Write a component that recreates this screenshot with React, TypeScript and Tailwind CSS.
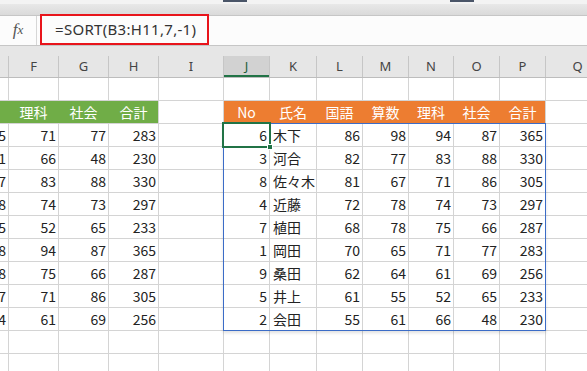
import React from 'react';

type Col = { key: string; w: string };

const cols: Col[] = [
  { key: '', w: 'w-[9px]' },
  { key: 'F', w: 'w-[50px]' },
  { key: 'G', w: 'w-[50px]' },
  { key: 'H', w: 'w-[50px]' },
  { key: 'I', w: 'w-[65px]' },
  { key: 'J', w: 'w-[46px]' },
  { key: 'K', w: 'w-[47px]' },
  { key: 'L', w: 'w-[46px]' },
  { key: 'M', w: 'w-[46px]' },
  { key: 'N', w: 'w-[45px]' },
  { key: 'O', w: 'w-[46px]' },
  { key: 'P', w: 'w-[46px]' },
  { key: 'Q', w: 'w-[64px]' },
];

// left table, columns E..H (E is cut off at the window edge)
const leftRows = [
  ['65', '71', '77', '283'],
  ['61', '66', '48', '230'],
  ['77', '83', '88', '330'],
  ['78', '74', '73', '297'],
  ['55', '52', '65', '233'],
  ['98', '94', '87', '365'],
  ['78', '75', '66', '287'],
  ['67', '71', '86', '305'],
  ['64', '61', '69', '256'],
];

// spilled result of SORT, columns J..P
const sorted = [
  ['6', '木下', '86', '98', '94', '87', '365'],
  ['3', '河合', '82', '77', '83', '88', '330'],
  ['8', '佐々木', '81', '67', '71', '86', '305'],
  ['4', '近藤', '72', '78', '74', '73', '297'],
  ['7', '植田', '68', '78', '75', '66', '287'],
  ['1', '岡田', '70', '65', '71', '77', '283'],
  ['9', '桑田', '62', '64', '61', '69', '256'],
  ['5', '井上', '61', '55', '52', '65', '233'],
  ['2', '会田', '55', '61', '66', '48', '230'],
];

const greenHead = ['', '理科', '社会', '合計'];
const orangeHead = ['No', '氏名', '国語', '算数', '理科', '社会', '合計'];

const cellBase = 'flex h-full shrink-0 items-center overflow-hidden whitespace-nowrap border-r border-[#d4d4d4]';

function Row({ cells }: { cells: React.ReactNode[] }) {
  return (
    <div className="flex h-[23px] border-b border-[#d4d4d4]">
      {cells.map((c, i) => (
        <React.Fragment key={i}>{c}</React.Fragment>
      ))}
    </div>
  );
}

function Num({ w, v }: { w: string; v: string }) {
  return <div className={`${cellBase} ${w} justify-end pr-[2px]`}>{v}</div>;
}

function Empty({ w }: { w: string }) {
  return <div className={`${cellBase} ${w}`} />;
}

export default function App() {
  const rows: React.ReactNode[][] = [];

  // row 1: empty
  rows.push(cols.map((c) => <Empty w={c.w} />));

  // row 2: headers
  rows.push(
    cols.map((c, i) => {
      if (i < 4) {
        return (
          <div className={`flex h-full shrink-0 items-center justify-center bg-[#70ad47] text-white ${c.w} ${i < 3 ? 'border-r border-[#70ad47]' : 'border-r border-[#d4d4d4]'}`}>
            {greenHead[i]}
          </div>
        );
      }
      if (i >= 5 && i <= 11) {
        return (
          <div className={`flex h-full shrink-0 items-center justify-center bg-[#ed7d31] text-white ${c.w} ${i < 11 ? 'border-r border-[#ed7d31]' : 'border-r border-[#d4d4d4]'}`}>
            {orangeHead[i - 5]}
          </div>
        );
      }
      return <Empty w={c.w} />;
    }),
  );

  // rows 3-11: data
  for (let r = 0; r < 9; r++) {
    const l = leftRows[r];
    const s = sorted[r];
    rows.push([
      <Num w={cols[0].w} v={l[0]} />,
      <Num w={cols[1].w} v={l[1]} />,
      <Num w={cols[2].w} v={l[2]} />,
      <Num w={cols[3].w} v={l[3]} />,
      <Empty w={cols[4].w} />,
      <Num w={cols[5].w} v={s[0]} />,
      <div className={`${cellBase} ${cols[6].w} pl-[3px]`}>{s[1]}</div>,
      <Num w={cols[7].w} v={s[2]} />,
      <Num w={cols[8].w} v={s[3]} />,
      <Num w={cols[9].w} v={s[4]} />,
      <Num w={cols[10].w} v={s[5]} />,
      <Num w={cols[11].w} v={s[6]} />,
      <Empty w={cols[12].w} />,
    ]);
  }

  // rows 12-13: empty
  rows.push(cols.map((c) => <Empty w={c.w} />));
  rows.push(cols.map((c) => <Empty w={c.w} />));

  return (
    <div className="h-[371px] w-[587px] overflow-hidden bg-white font-['Noto_Sans_CJK_JP',sans-serif] text-[#222]">
      {/* ribbon edge */}
      <div className="h-[16px] border-b border-[#c6c6c6]">
        <div className="flex h-[4px] bg-[#f3f3f3] pl-[223px]">
          <span className="h-[2px] w-[24px] bg-[#4a5568]" />
          <span className="ml-[203px] h-[2px] w-[24px] bg-[#4a5568]" />
        </div>
        <div className="h-[11px] bg-gradient-to-b from-[#e8e8e8] to-[#dadada]" />
      </div>

      {/* formula bar */}
      <div className="flex h-[30px] items-start border-b border-[#c6c6c6] bg-[#fcfcfc]">
        <div className="flex h-full w-[37px] items-center justify-center border-r border-[#d6d6d6] pb-[1px] font-['Liberation_Serif',serif] text-[17px] italic text-[#555]">
          f<span className="text-[13px]">x</span>
        </div>
        <div className="-mt-[2px] ml-[3px] flex h-[31px] w-[169px] items-center border-2 border-[#e8141b] pl-[13px] font-['Noto_Sans',sans-serif] text-[15px] tracking-[0.3px] text-[#333]">
          =SORT(B3:H11,7,-1)
        </div>
      </div>

      {/* column headers */}
      <div className="h-[10px] bg-[#e6e6e6]" />
      <div className="flex h-[22px] border-b border-[#bdbdbd] bg-[#e6e6e6] font-['Noto_Sans',sans-serif] text-[13px] text-[#444]">
        {cols.map((c) =>
          c.key === 'J' ? (
            <div
              key="J"
              className={`flex h-full shrink-0 items-center justify-center border-r border-[#c6c6c6] bg-[#d2d2d2] text-[#1d5e3a] shadow-[inset_0_-2px_0_#217346] ${c.w}`}
            >
              {c.key}
            </div>
          ) : (
            <div key={c.key || 'E'} className={`flex h-full shrink-0 items-center justify-center border-r border-[#c6c6c6] ${c.w}`}>
              {c.key}
            </div>
          ),
        )}
      </div>

      {/* grid */}
      <div className="relative text-[14px]">
        {rows.map((cells, i) => (
          <Row key={i} cells={cells} />
        ))}

        {/* spill range */}
        <div className="pointer-events-none absolute left-[223px] top-[45px] h-[208px] w-[323px] border border-[#3b6cc7] shadow-[0_2px_3px_rgba(0,0,0,0.12)]" />

        {/* active cell J3 */}
        <div className="pointer-events-none absolute left-[222px] top-[44px] h-[26px] w-[49px] border-2 border-[#217346]">
          <span className="absolute -bottom-[4px] -right-[4px] h-[6px] w-[6px] border border-white bg-[#217346]" />
        </div>
      </div>
    </div>
  );
}
